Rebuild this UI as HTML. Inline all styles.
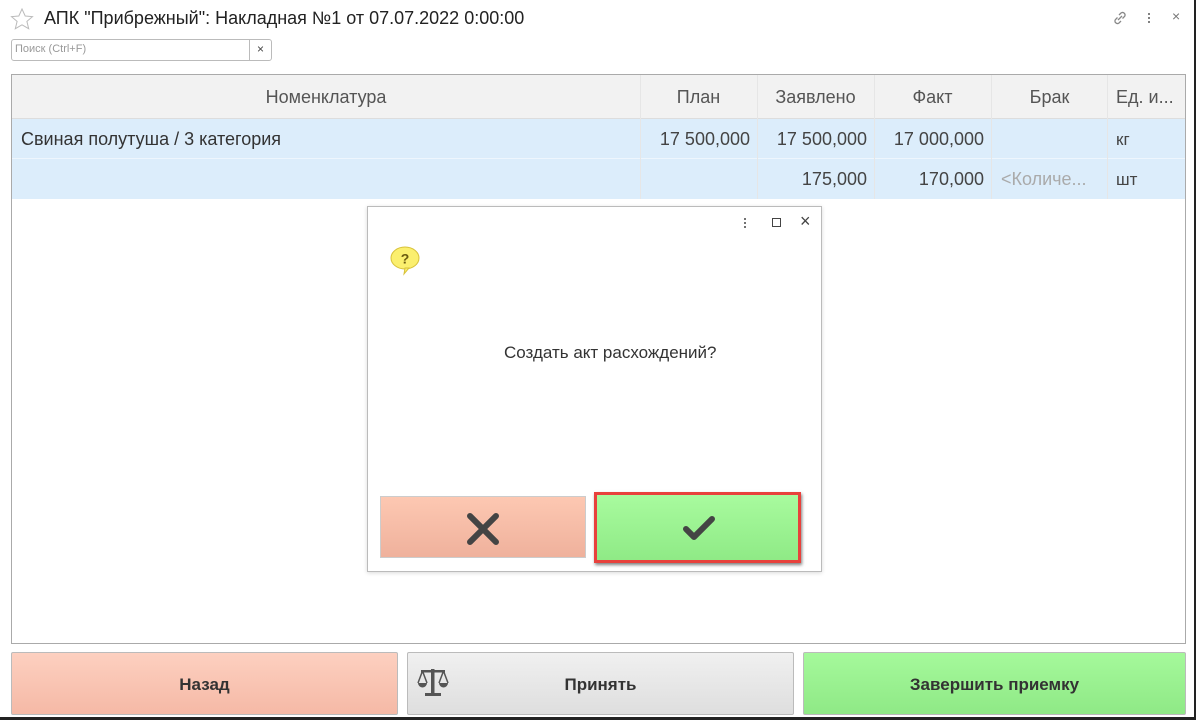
<!DOCTYPE html>
<html><head><meta charset="utf-8"><style>
*{box-sizing:border-box;margin:0;padding:0}
body{width:1196px;height:720px;background:#fff;font-family:"Liberation Sans",sans-serif;position:relative;overflow:hidden;border-right:2px solid #222;border-bottom:3px solid #222}
.abs{position:absolute}
.title{left:44px;top:8px;font-size:18px;color:#222}
.search{left:11px;top:39px;width:261px;height:22px;border:1px solid #bbb;border-radius:3px;font-size:11px;color:#999;padding:3px 3px}
.search .x{position:absolute;right:0;top:0;width:22px;height:20px;border-left:1px solid #bbb;text-align:center;color:#444;font-size:12px;line-height:19px}
.tbl{left:11px;top:74px;width:1175px;height:570px;border:1px solid #aaa}
.hdr{left:0;top:0;width:1173px;height:44px;background:#f2f2f2;border-bottom:1px solid #ddd}
.row{left:0;width:1173px;height:40px;background:#dcedfb}
.c{position:absolute;font-size:18px;color:#444;top:0;height:100%;line-height:44px;white-space:nowrap}
.vl{position:absolute;top:0;width:1px;height:124px;background:#e6e6e6}
.btn{top:652px;height:63px;border:1px solid #bbb;border-radius:2px;font-weight:bold;font-size:17px;color:#333;text-align:center;line-height:63px}
.dlg{left:367px;top:206px;width:455px;height:366px;border:1px solid #bbb;background:#fff;box-shadow:0 1px 4px rgba(0,0,0,.15)}
</style></head><body>
<svg class="abs" style="left:10px;top:8px" width="24" height="22" viewBox="0 0 24 22"><path d="M12 1l3.2 7 7.3.6-5.6 4.8 1.8 7.3L12 16.8 5.3 20.7l1.8-7.3L1.5 8.6 8.8 8z" fill="none" stroke="#bbb" stroke-width="1"/></svg>
<div class="abs title">АПК "Прибрежный": Накладная №1 от 07.07.2022 0:00:00</div>
<svg class="abs" style="left:1112px;top:10px" width="16" height="16" viewBox="0 0 16 16" fill="none" stroke="#888" stroke-width="1.3"><path d="M7 5l2-2a2.5 2.5 0 013.5 3.5l-2 2M9 11l-2 2A2.5 2.5 0 013.5 9.5l2-2M6 10l4-4"/></svg>
<div class="abs" style="left:1148px;top:12px;width:2px;height:11px;background:radial-gradient(circle,#777 1px,transparent 1.2px) 0 0/2px 4px"></div>
<div class="abs" style="left:1172px;top:8px;font-size:14px;color:#777">×</div>
<div class="abs search">Поиск (Ctrl+F)<div class="x">×</div></div>
<div class="abs tbl">
<div class="abs hdr"></div>
<div class="abs row" style="top:44px;border-bottom:1px solid #eef6fd"></div>
<div class="abs row" style="top:84px"></div>
<div class="vl" style="left:628px"></div><div class="vl" style="left:745px"></div><div class="vl" style="left:862px"></div><div class="vl" style="left:979px"></div><div class="vl" style="left:1095px"></div>
<div class="c" style="left:0;width:628px;text-align:center;height:44px;color:#555">Номенклатура</div>
<div class="c" style="left:628px;width:117px;text-align:center;height:44px;color:#555">План</div>
<div class="c" style="left:745px;width:117px;text-align:center;height:44px;color:#555">Заявлено</div>
<div class="c" style="left:862px;width:117px;text-align:center;height:44px;color:#555">Факт</div>
<div class="c" style="left:979px;width:117px;text-align:center;height:44px;color:#555">Брак</div>
<div class="c" style="left:1104px;height:44px;color:#555">Ед. и...</div>
<div class="c" style="left:9px;top:44px;height:40px;line-height:40px;color:#333">Свиная полутуша / 3 категория</div>
<div class="c" style="left:628px;width:110px;top:44px;height:40px;line-height:40px;text-align:right">17 500,000</div>
<div class="c" style="left:745px;width:110px;top:44px;height:40px;line-height:40px;text-align:right">17 500,000</div>
<div class="c" style="left:862px;width:110px;top:44px;height:40px;line-height:40px;text-align:right">17 000,000</div>
<div class="c" style="left:1104px;top:44px;height:40px;line-height:42px;font-size:17px">кг</div>
<div class="c" style="left:745px;width:110px;top:84px;height:40px;line-height:40px;text-align:right">175,000</div>
<div class="c" style="left:862px;width:110px;top:84px;height:40px;line-height:40px;text-align:right">170,000</div>
<div class="c" style="left:989px;top:84px;height:40px;line-height:40px;color:#aaa">&lt;Количе...</div>
<div class="c" style="left:1104px;top:84px;height:40px;line-height:42px;font-size:17px">шт</div>
</div>
<div class="abs btn" style="left:11px;width:387px;background:linear-gradient(#fdd0c0,#f5b9a6)">Назад</div>
<div class="abs btn" style="left:407px;width:387px;background:linear-gradient(#f0f0f0,#dedede)">Принять
<svg style="position:absolute;left:8px;top:14px" width="34" height="32" viewBox="0 0 34 32" fill="#555"><rect x="15" y="2" width="3.5" height="24"/><rect x="5" y="3" width="24" height="2.5"/><rect x="9" y="26" width="16" height="3"/><path d="M2 16a4.5 4.5 0 009 0z M23 16a4.5 4.5 0 009 0z"/><path d="M6.5 4l-4.5 12M6.5 4l4.5 12M27.5 4l-4.5 12M27.5 4l4.5 12" stroke="#555" stroke-width="1.5" fill="none"/></svg></div>
<div class="abs btn" style="left:803px;width:383px;background:linear-gradient(#a5f99b,#8fe986)">Завершить приемку</div>
<div class="abs dlg">
<div class="abs" style="left:376px;top:10px;width:2px;height:11px;background:radial-gradient(circle,#666 1px,transparent 1.2px) 0 0/2px 4px"></div>
<div class="abs" style="left:404px;top:11px;width:9px;height:9px;border:1.3px solid #444"></div>
<div class="abs" style="left:432px;top:4px;font-size:18px;color:#444">×</div>
<svg class="abs" style="left:22px;top:38px" width="32" height="32" viewBox="0 0 32 32"><ellipse cx="15" cy="13" rx="14" ry="11" fill="#fbef6e" stroke="#d8c23a"/><path d="M15 23l-1 6 5-6z" fill="#fbef6e" stroke="#d8c23a"/><text x="15" y="18.5" text-anchor="middle" font-size="14" font-weight="bold" fill="#6a5a10" font-family="Liberation Sans">?</text></svg>
<div class="abs" style="left:136px;top:136px;font-size:17px;color:#333">Создать акт расхождений?</div>
<div class="abs" style="left:12px;top:289px;width:206px;height:62px;border:1px solid #ccc;background:linear-gradient(#fdc8b2,#efb19c)">
<svg style="position:absolute;left:85px;top:15px" width="34" height="34" viewBox="0 0 34 34"><path d="M4 4l26 26M30 4L4 30" stroke="#444" stroke-width="6" stroke-linecap="round"/></svg></div>
<div class="abs" style="left:226px;top:285px;width:207px;height:71px;border:3px solid #e8413c;box-shadow:1px 2px 3px rgba(0,0,0,.5);background:linear-gradient(#a8fb9e,#8fea86)">
<svg style="position:absolute;left:85px;top:18px" width="34" height="30" viewBox="0 0 34 30"><path d="M4 16l8 8L30 6" stroke="#444" stroke-width="6" fill="none" stroke-linecap="round" stroke-linejoin="round"/></svg></div>
</div>
</body></html>
